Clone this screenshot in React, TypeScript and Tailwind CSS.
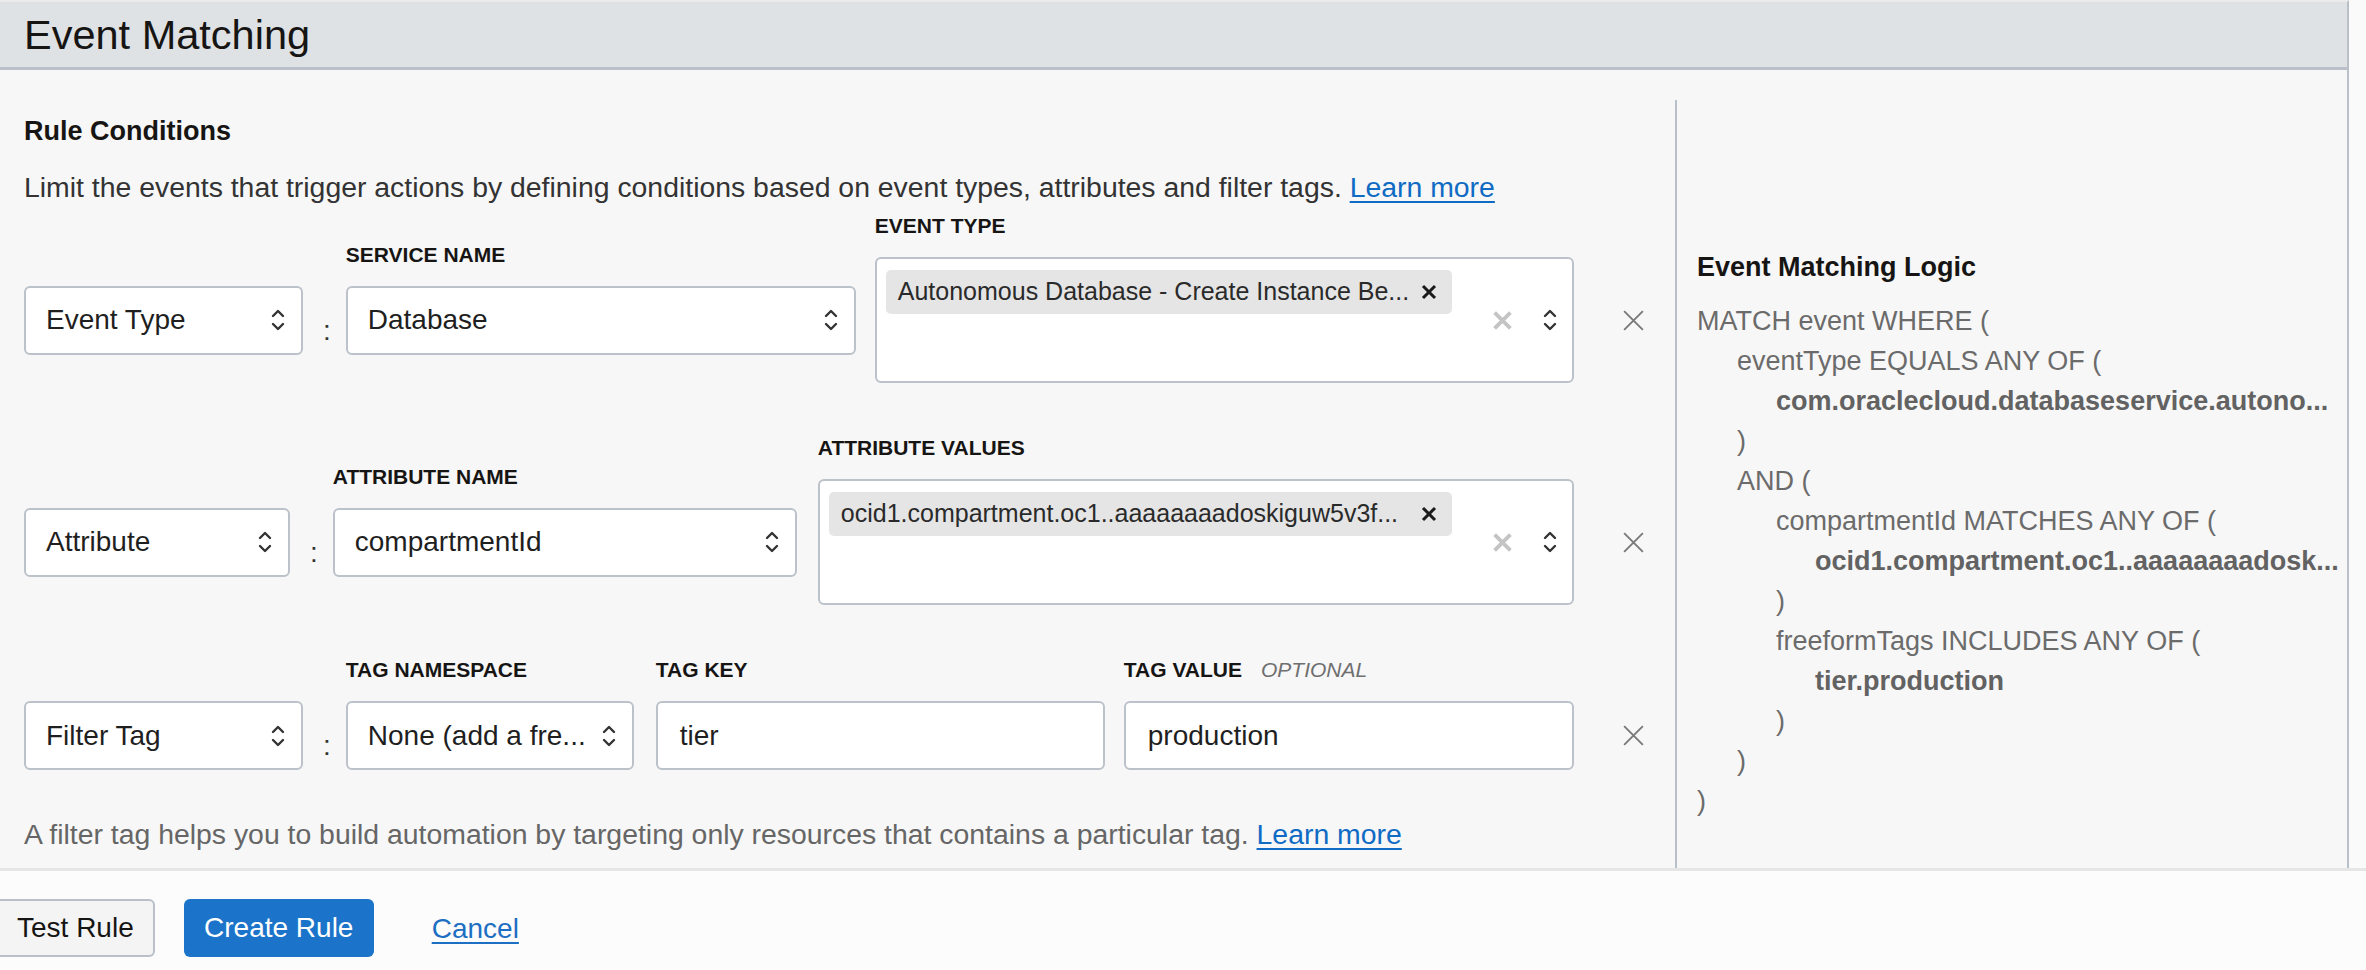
import React from "react";

function Chevrons({ className = "" }: { className?: string }) {
  return (
    <svg className={className} width="14" height="28" viewBox="0 0 14 28" fill="none" stroke="#333" strokeWidth={2.4} strokeLinecap="round" strokeLinejoin="round">
      <path d="M2 10 L7 5 L12 10" />
      <path d="M2 18 L7 23 L12 18" />
    </svg>
  );
}

function Cross({ size, stroke, width }: { size: number; stroke: string; width: number }) {
  return (
    <svg width={size} height={size} viewBox="0 0 24 24" fill="none" stroke={stroke} strokeWidth={width} strokeLinecap="butt">
      <path d="M3 3 L21 21 M21 3 L3 21" />
    </svg>
  );
}

function Label({ children }: { children?: React.ReactNode }) {
  return (
    <div className="h-[28px] mb-[17px] text-[21px] font-bold leading-[28px] uppercase whitespace-nowrap text-[#161513]">
      {children}
    </div>
  );
}

function Select({ value, width, label }: { value: string; width: string; label?: React.ReactNode }) {
  return (
    <div className="flex flex-col">
      <Label>{label}</Label>
      <div className={`${width} h-[69px] rounded-[6px] border-2 border-[#bcc2ca] bg-white flex items-center justify-between pl-[20px] pr-[16px]`}>
        <span className="text-[28px] text-[#1f1f1f] whitespace-nowrap">{value}</span>
        <Chevrons />
      </div>
    </div>
  );
}

function TextInput({ value, width, label }: { value: string; width: string; label?: React.ReactNode }) {
  return (
    <div className="flex flex-col">
      <Label>{label}</Label>
      <div className={`${width} h-[69px] rounded-[6px] border-2 border-[#bcc2ca] bg-white flex items-center pl-[22px]`}>
        <span className="text-[28px] text-[#1f1f1f]">{value}</span>
      </div>
    </div>
  );
}

function MultiSelect({ chip, width, label }: { chip: string; width: string; label: string }) {
  return (
    <div className="flex flex-col">
      <Label>{label}</Label>
      <div className={`${width} h-[126px] rounded-[6px] border-2 border-[#bcc2ca] bg-white flex items-center pl-[9px] pr-[15px]`}>
        <div className="flex-1 self-start pt-[11px]">
          <div className="h-[44px] rounded-[5px] bg-[#e5e5e5] flex items-center justify-between pl-[12px] pr-[15px]">
            <span className="text-[25px] text-[#2a2a2a] whitespace-nowrap">{chip}</span>
            <Cross size={16} stroke="#1b1b1b" width={4.6} />
          </div>
        </div>
        <div className="ml-[40px] flex items-center gap-[30px]">
          <Cross size={21} stroke="#c4c4c4" width={4.4} />
          <Chevrons />
        </div>
      </div>
    </div>
  );
}

function Colon() {
  return (
    <div className="flex flex-col ml-[20px] mr-[15px]">
      <Label />
      <div className="h-[69px] pt-[31px] text-[28px] leading-[28px] text-[#333]">:</div>
    </div>
  );
}

function Remove() {
  return (
    <div className="flex flex-col ml-[47px]">
      <Label />
      <div className="h-[25px] w-[25px]">
        <Cross size={25} stroke="#7a7a7a" width={1.8} />
      </div>
    </div>
  );
}

const logic: { text: string; indent: number; bold?: boolean }[] = [
  { text: "MATCH event WHERE (", indent: 0 },
  { text: "eventType EQUALS ANY OF (", indent: 1 },
  { text: "com.oraclecloud.databaseservice.autono...", indent: 2, bold: true },
  { text: ")", indent: 1 },
  { text: "AND (", indent: 1 },
  { text: "compartmentId MATCHES ANY OF (", indent: 2 },
  { text: "ocid1.compartment.oc1..aaaaaaaadosk...", indent: 3, bold: true },
  { text: ")", indent: 2 },
  { text: "freeformTags INCLUDES ANY OF (", indent: 2 },
  { text: "tier.production", indent: 3, bold: true },
  { text: ")", indent: 2 },
  { text: ")", indent: 1 },
  { text: ")", indent: 0 },
];

const indents = ["pl-0", "pl-[40px]", "pl-[79px]", "pl-[118px]"];

export default function App() {
  return (
    <div className="min-h-screen bg-[#fafafa] font-['Liberation_Sans',Arial,sans-serif] text-[#161513]">
      <div className="w-[2349px] border-r-2 border-[#b9c0c8] border-t-2 border-t-[#ebebeb]">
        <header className="h-[68px] bg-[#dfe2e5] border-b-[3px] border-[#b9c0c8] flex items-center px-[24px]">
          <h1 className="text-[41.5px] text-[#161513] leading-none">Event Matching</h1>
        </header>

        <div className="flex h-[798px] bg-[#f7f7f7]">
          <div className="w-[1675px] pl-[24px] pt-[41px]">
            <h2 className="text-[27px] font-bold leading-[40px]">Rule Conditions</h2>
            <p className="mt-[16px] text-[28.4px] leading-[40px] text-[#333]">
              Limit the events that trigger actions by defining conditions based on event types, attributes and filter tags.{" "}
              <a className="text-[#0f6bc4] underline underline-offset-4">Learn more</a>
            </p>

            <div className="mt-[5px] flex flex-col gap-[51px]">
              <div className="flex items-center">
                <Select value="Event Type" width="w-[279px]" />
                <Colon />
                <Select value="Database" width="w-[510px]" label="Service Name" />
                <div className="ml-[19px]">
                  <MultiSelect chip="Autonomous Database - Create Instance Be..." width="w-[699px]" label="Event Type" />
                </div>
                <Remove />
              </div>

              <div className="flex items-center">
                <Select value="Attribute" width="w-[266px]" />
                <Colon />
                <Select value="compartmentId" width="w-[464px]" label="Attribute Name" />
                <div className="ml-[21px]">
                  <MultiSelect chip="ocid1.compartment.oc1..aaaaaaaadoskiguw5v3f..." width="w-[756px]" label="Attribute Values" />
                </div>
                <Remove />
              </div>

              <div className="flex items-center">
                <Select value="Filter Tag" width="w-[279px]" />
                <Colon />
                <Select value="None (add a fre..." width="w-[288px]" label="Tag Namespace" />
                <div className="ml-[22px]">
                  <TextInput value="tier" width="w-[449px]" label="Tag Key" />
                </div>
                <div className="ml-[19px]">
                  <TextInput
                    value="production"
                    width="w-[450px]"
                    label={
                      <>
                        Tag Value
                        <span className="ml-[19px] font-normal italic text-[#6f6f6f]">Optional</span>
                      </>
                    }
                  />
                </div>
                <Remove />
              </div>
            </div>

            <p className="mt-[44px] text-[28.4px] leading-[40px] text-[#666]">
              A filter tag helps you to build automation by targeting only resources that contains a particular tag.{" "}
              <a className="text-[#0f6bc4] underline underline-offset-4">Learn more</a>
            </p>
          </div>

          <div className="flex-1 mt-[30px] border-l-2 border-[#b9c0c8] pl-[20px] pt-[147px]">
            <h3 className="text-[27px] font-bold leading-[40px] text-[#161513]">Event Matching Logic</h3>
            <div className="mt-[14px] text-[27px] leading-[40px] text-[#6b6b6b] whitespace-nowrap">
              {logic.map((l, i) => (
                <div key={i} className={`${indents[l.indent]} ${l.bold ? "font-bold text-[#626262]" : ""}`}>
                  {l.text}
                </div>
              ))}
            </div>
          </div>
        </div>
      </div>

      <footer className="h-[102px] border-t-[3px] border-[#e6e6e6] bg-[#fcfcfc] flex items-start pt-[28px]">
        <button className="h-[58px] pl-[17px] pr-[19px] bg-[#f4f4f4] border-2 border-l-0 border-[#b9c0c8] rounded-r-[6px] text-[28px] text-[#161513]">
          Test Rule
        </button>
        <button className="ml-[29px] h-[58px] w-[190px] bg-[#1b74c9] rounded-[6px] text-[28px] text-white">
          Create Rule
        </button>
        <a className="ml-[58px] mt-[9px] text-[28px] text-[#1d6fc3] underline underline-offset-4">Cancel</a>
      </footer>
    </div>
  );
}
